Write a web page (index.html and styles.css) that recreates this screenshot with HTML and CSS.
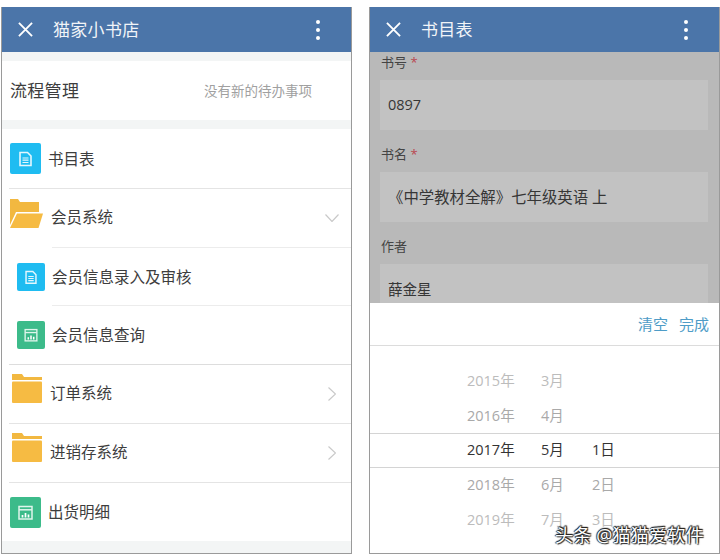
FILE: index.html
```html
<!DOCTYPE html>
<html lang="zh-CN">
<head>
    <meta charset="UTF-8">
    <title>猫家小书店</title>
    <link rel="stylesheet" href="styles.css">
</head>
<body>
    <svg class="defs" width="0" height="0">
        <symbol id="doc" viewBox="0 0 31 31">
            <path d="M10 9.500h7.500l3.500 3.500v9.500h-11z" fill="none" stroke="#e4f7fe" stroke-width="1.600"/>
            <path d="M12.500 15h6M12.500 17.200h6M12.500 19.500h6" stroke="#e4f7fe" stroke-width="1.200"/>
        </symbol>
        <symbol id="chart" viewBox="0 0 31 31">
            <rect x="9" y="9.500" width="13" height="12.500" fill="none" stroke="#dff5ec" stroke-width="1.500"/>
            <path d="M9 12.800h13" stroke="#dff5ec" stroke-width="1.500"/>
            <path d="M12.500 20.500v-2.500M15.500 20.500v-4.500M18.500 20.500v-3" stroke="#fff" stroke-width="1.700"/>
        </symbol>
        <symbol id="folder" viewBox="0 0 30 30">
            <path d="M0 0h10l2 3h18v3H0z" fill="#f2b840"/>
            <rect x="0" y="7.500" width="30" height="21.500" rx="1" fill="#f6bb43"/>
        </symbol>
        <symbol id="folder-open" viewBox="0 0 33 30">
            <path d="M0 0h8l2 3h19v10H6L0 26z" fill="#f2b840"/>
            <path d="M7 14.500h26l-4.500 14.500H0z" fill="#f6bb43"/>
        </symbol>
    </svg>

    <div class="page">
        <div class="phone">
            <header class="topbar">
                <svg class="close" viewBox="0 0 16 16"><path d="M1 1l14 14M15 1L1 15"/></svg>
                <span class="title">猫家小书店</span>
                <span class="dots"><i></i><i></i><i></i></span>
            </header>
            <div class="band"></div>
            <div class="process">
                <span class="process-name">流程管理</span>
                <span class="process-note">没有新的待办事项</span>
            </div>
            <div class="band"></div>

            <div class="row row-tall">
                <span class="tile tile-blue"><svg><use href="#doc"/></svg></span>
                <span class="row-text">书目表</span>
            </div>
            <div class="line"></div>
            <div class="row">
                <svg class="folder-open"><use href="#folder-open"/></svg>
                <span class="row-text row-text-folder">会员系统</span>
                <svg class="chev-down" viewBox="0 0 14 8"><path d="M.5.5L7 7.500 13.500.5"/></svg>
            </div>
            <div class="line line-sub"></div>
            <div class="row row-sub row-short">
                <span class="tile tile-blue tile-small"><svg><use href="#doc"/></svg></span>
                <span class="row-text">会员信息录入及审核</span>
            </div>
            <div class="line line-sub"></div>
            <div class="row row-sub">
                <span class="tile tile-green tile-small"><svg><use href="#chart"/></svg></span>
                <span class="row-text row-text-up">会员信息查询</span>
            </div>
            <div class="line line-thick"></div>
            <div class="row">
                <svg class="folder"><use href="#folder"/></svg>
                <span class="row-text row-text-folder">订单系统</span>
                <svg class="chev-right" viewBox="0 0 8 14"><path d="M.5.5L7.500 7 .5 13.500"/></svg>
            </div>
            <div class="line"></div>
            <div class="row">
                <svg class="folder"><use href="#folder"/></svg>
                <span class="row-text row-text-folder">进销存系统</span>
                <svg class="chev-right" viewBox="0 0 8 14"><path d="M.5.5L7.500 7 .5 13.500"/></svg>
            </div>
            <div class="line"></div>
            <div class="row">
                <span class="tile tile-green"><svg><use href="#chart"/></svg></span>
                <span class="row-text row-text-up">出货明细</span>
            </div>
            <div class="band band-end"></div>
        </div>

        <div class="phone">
            <header class="topbar">
                <svg class="close" viewBox="0 0 16 16"><path d="M1 1l14 14M15 1L1 15"/></svg>
                <span class="title">书目表</span>
                <span class="dots"><i></i><i></i><i></i></span>
            </header>
            <div class="form">
                <div class="field">
                    <div class="label">书号 <em>*</em></div>
                    <div class="input">0897</div>
                </div>
                <div class="field">
                    <div class="label">书名 <em>*</em></div>
                    <div class="input input-long">《中学教材全解》七年级英语 上</div>
                </div>
                <div class="field">
                    <div class="label">作者</div>
                    <div class="input">薛金星</div>
                </div>
            </div>
            <div class="sheet">
                <div class="sheet-bar">
                    <span>清空</span>
                    <span>完成</span>
                </div>
                <div class="picker">
                    <div class="pick pick-far"><span>2015年</span><span>3月</span><span></span></div>
                    <div class="pick"><span>2016年</span><span>4月</span><span></span></div>
                    <div class="pick pick-now"><span>2017年</span><span>5月</span><span>1日</span></div>
                    <div class="pick"><span>2018年</span><span>6月</span><span>2日</span></div>
                    <div class="pick pick-far"><span>2019年</span><span>7月</span><span>3日</span></div>
                </div>
            </div>
        </div>

        <div class="watermark">头条 @猫猫爱软件</div>
    </div>
</body>
</html>
```

FILE: styles.css
```css
*{
    margin: 0;
    padding: 0;
    box-sizing: border-box;
}
body{
    background: #fff;
    font-family: "Open Sans", "Noto Sans CJK SC", sans-serif;
    color: #3d3d3d;
    overflow: hidden;
}
.defs{
    position: absolute;
}
.page{
    position: relative;
    display: flex;
    gap: 17px;
    height: 560px;
    padding: 7px 0 0 1px;
}
.phone{
    display: flex;
    flex-direction: column;
    width: 351px;
    height: 547px;
    background: #fff;
    border: 1px solid #9a9a9a;
    border-top: 0;
    overflow: hidden;
}
.topbar{
    display: flex;
    flex: none;
    align-items: center;
    height: 45px;
    padding: 0 31px 0 16px;
    background: #4b75a9;
    color: #fff;
}
.close{
    width: 15px;
    height: 15px;
    margin-right: 20px;
    fill: none;
    stroke: #fff;
    stroke-width: 2;
}
.title{
    flex: 1;
    padding-bottom: 2px;
    font-size: 17px;
    letter-spacing: .3px;
    color: #f1f4f8;
}
.dots{
    display: flex;
    flex-direction: column;
    gap: 4px;
}
.dots i{
    width: 4px;
    height: 4px;
    border-radius: 50%;
    background: #fff;
}

/* left screen */
.band{
    flex: none;
    height: 9px;
    background: #f3f5f5;
}
.band-end{
    flex: 1;
}
.process{
    display: flex;
    flex: none;
    align-items: center;
    justify-content: space-between;
    height: 59px;
    padding: 0 39px 2px 8px;
}
.process-name{
    font-size: 17px;
    letter-spacing: .3px;
}
.process-note{
    font-size: 13.500px;
    color: #a0a0a0;
}
.row{
    display: flex;
    flex: none;
    align-items: center;
    height: 58px;
    padding-left: 8px;
}
.row-tall{
    height: 59px;
}
.row-short{
    height: 57px;
}
.row-sub{
    padding-left: 15px;
}
.row-text{
    margin-left: 7px;
    font-size: 15.500px;
}
.row-text-up{
    margin-bottom: 2px;
}
.row-text-folder{
    margin: 0 0 3px 8px;
}
.line{
    flex: none;
    height: 1px;
    margin-left: 7px;
    background: #e4e4e4;
}
.line-sub{
    margin-left: 50px;
    background: #ececec;
}
.line-thick{
    background: #ddd;
}
.tile{
    display: block;
    width: 31px;
    height: 31px;
    border-radius: 2px;
}
.tile svg{
    display: block;
    width: 100%;
    height: 100%;
}
.tile-small{
    width: 28px;
    height: 28px;
}
.tile-blue{
    background: #1fbcf1;
}
.tile-green{
    background: #3cbb8a;
}
.folder-open{
    width: 33px;
    height: 30px;
    margin-top: -8px;
}
.folder{
    flex: none;
    width: 30px;
    height: 30px;
    margin: -10px 0 0 2px;
}
.chev-down{
    width: 14px;
    height: 8px;
    margin-left: auto;
    margin-right: 12px;
    fill: none;
    stroke: #c9c9c9;
    stroke-width: 1.200;
}
.chev-right{
    width: 8px;
    height: 14px;
    margin-left: auto;
    margin-right: 15px;
    fill: none;
    stroke: #c9c9c9;
    stroke-width: 1.200;
}

/* right screen */
.form{
    flex: none;
    height: 251px;
    padding: 0 11px 0 10px;
    background: #b9b9b9;
    overflow: hidden;
}
.field{
    margin-bottom: 14px;
}
.label{
    height: 20px;
    margin-bottom: 8px;
    padding-left: 1px;
    font-size: 13px;
    line-height: 20px;
    color: #444;
}
.label em{
    font-style: normal;
    color: #b9474f;
}
.input{
    display: flex;
    align-items: center;
    height: 50px;
    padding: 0 0 2px 8px;
    font-size: 14.500px;
    background: #c2c2c2;
    color: #363636;
}
.input-long{
    font-size: 15.400px;
}
.sheet{
    flex: 1;
    background: #fff;
}
.sheet-bar{
    display: flex;
    justify-content: flex-end;
    align-items: center;
    gap: 11px;
    height: 43px;
    padding: 0 10px 2px 0;
    border-bottom: 1px solid #dcdcdc;
    font-size: 15px;
    color: #4e9cc7;
}
.picker{
    padding-top: 18px;
}
.pick{
    display: grid;
    grid-template-columns: 74px 51px 1fr;
    align-items: center;
    height: 34.600px;
    padding: 0 0 3px 97px;
    font-size: 14.500px;
    color: #a9a9a9;
}
.pick-far{
    color: #bcbcbc;
}
.pick-now{
    color: #333;
    border-top: 1px solid #d4d4d4;
    border-bottom: 1px solid #d4d4d4;
}
.watermark{
    position: absolute;
    left: 555px;
    top: 522px;
    font-size: 18px;
    letter-spacing: .2px;
    line-height: 26px;
    white-space: nowrap;
    color: #fff;
    text-shadow: 1px 1px 1px #222, -1px 0 1px #222, 0 -1px 1px #222, 1px -1px 1px #222;
}
```
